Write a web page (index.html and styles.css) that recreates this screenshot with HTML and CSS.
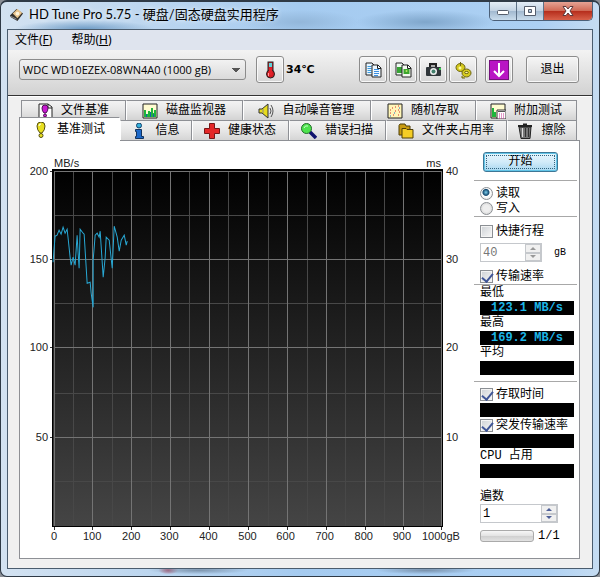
FILE: index.html
```html
<!DOCTYPE html>
<html lang="zh-CN">
<head>
<meta charset="utf-8">
<title>HD Tune Pro 5.75</title>
<link rel="stylesheet" href="styles.css">
</head>
<body>
<div class="window">
  <header class="titlebar">
    <svg class="app-icon" viewBox="0 0 16 16"><path d="M1 9 8 2l7 5-6 8-7-4z" fill="#33302c"/><path d="M4 7 9 2l5 4-5 6z" fill="#e9c48c"/><circle cx="9" cy="7" r="2" fill="#fff3d8"/><path d="m2 10 6 3" stroke="#999"/></svg>
    <h1 class="title">HD Tune Pro 5.75 - 硬盘/固态硬盘实用程序</h1>
    <div class="caption-buttons">
      <button class="cap" aria-label="最小化"><svg viewBox="0 0 14 12"><rect x="1.500" y="5.500" width="11" height="4" rx="1" fill="#fff" stroke="#555d6b"/></svg></button>
      <button class="cap" aria-label="最大化"><svg viewBox="0 0 14 12"><path d="M1.500 1.500h11v9h-11zM5.500 4.500v3h3v-3z" fill="#fff" fill-rule="evenodd" stroke="#555d6b"/></svg></button>
      <button class="cap close" aria-label="关闭"><svg viewBox="0 0 14 12"><path d="M2 1.500h3l2 2.500 2-2.500h3L9 6l3 4.500H9L7 8l-2 2.500H2L5 6z" fill="#fff" stroke="#5d3a3c"/></svg></button>
    </div>
  </header>

  <main class="client">
    <nav class="menu">
      <button>文件(<u>F</u>)</button>
      <button>帮助(<u>H</u>)</button>
    </nav>

    <div class="toolbar">
      <select class="drive" aria-label="硬盘"><option>WDC WD10EZEX-08WN4A0 (1000 gB)</option></select>
      <button class="tool" aria-label="温度"><svg viewBox="0 0 18 18"><rect x="7" y="1" width="5" height="11" fill="#d81c24" stroke="#222"/><path d="M8 2h3v4H8z" fill="#5ed3d9"/><circle cx="9.500" cy="13" r="4" fill="#d81c24" stroke="#222"/><path d="M8 7h3v7H8z" fill="#e3222a"/><path d="M7.500 12v3" stroke="#ff9b9b"/></svg></button>
      <output class="temp">34℃</output>
      <div class="tools">
        <button class="tool" aria-label="复制文本"><svg viewBox="0 0 18 18"><path d="M2 2h6l2 2v10H2z" fill="#e9f6ff" stroke="#222"/><path d="M3.500 5.500h4m-4 2h4m-4 2h4m-4 2h4" stroke="#3a9be0"/><path d="M8 4h6l3 3v9H8z" fill="#eef8ff" stroke="#222"/><path d="M13.500 4v3.500H17" fill="none" stroke="#222"/><path d="M10 8.500h5m-5 2h5m-5 2h5m-5 2h4" stroke="#3a8ee0"/></svg></button>
        <button class="tool" aria-label="复制图像"><svg viewBox="0 0 18 18"><path d="M2 2h6l2 2v10H2z" fill="#eefaf0" stroke="#222"/><path d="M3 6h5v6H3z" fill="#37a534"/><path d="M8 4h6l3 3v9H8z" fill="#f3faf0" stroke="#222"/><path d="M13.500 4v3.500H17" fill="none" stroke="#222"/><path d="M9.500 8h6v5h-6z" fill="#3ca72c"/><circle cx="12.500" cy="10" r="1" fill="#bde66a"/></svg></button>
        <button class="tool" aria-label="截图"><svg viewBox="0 0 18 18"><path d="M6 6V3h6v3" fill="#aaa" stroke="#222" stroke-width="2"/><rect x="2" y="6" width="15" height="9" rx="1" fill="#30363a"/><circle cx="9.500" cy="10.500" r="3.500" fill="#eee"/><circle cx="9.500" cy="10.500" r="2" fill="#42806c"/><path d="M15 7h2v2h-2z" fill="#30d14c"/></svg></button>
        <button class="tool" aria-label="选项"><svg viewBox="0 0 18 18"><g fill="#d5ca1d" stroke="#6c6410"><ellipse cx="6.500" cy="6.500" rx="4.500" ry="4"/><path d="M6.500 1v4"/><ellipse cx="12.500" cy="12" rx="4.500" ry="4"/><path d="M8 15v2h3"/></g><circle cx="6" cy="7" r="1.500" fill="#fff8a0"/><ellipse cx="12.500" cy="11.500" rx="2" ry="1" fill="#fff8a0" stroke="#6c6410"/></svg></button>
      </div>
      <button class="tool" aria-label="保存"><svg class="big" viewBox="0 0 20 20"><rect x=".5" y=".5" width="19" height="19" fill="#b915c4" stroke="#74107c"/><path d="M10 3v13M5 11l5 5 5-5" fill="none" stroke="#fff" stroke-width="2"/></svg></button>
      <button class="exit">退出</button>
    </div>

    <section class="body">
      <div class="tabs upper" role="tablist">
        <button role="tab"><svg viewBox="0 0 16 16"><path d="M2 1h9l4 3v11H2z" fill="#fff" stroke="#222"/><path d="M11 1v4h4" fill="none" stroke="#222"/><path d="M5 5q0-3 3-3t3 3q0 3-2 5H7Q5 8 5 5z" fill="#c719d0" stroke="#4b1050"/><circle cx="8" cy="12.500" r="1.500" fill="#c719d0" stroke="#4b1050"/></svg>文件基准</button>
        <button role="tab"><svg viewBox="0 0 16 16"><path d="M1 1h14v14H1z" fill="#fffbd0" stroke="#222"/><path d="M2 14V7h2v4h2V8h2v4h1V5h2v5h1V7h2v7z" fill="#1fb53c"/><path d="M4.500 14v-3m4 3V9m3 5v-3" stroke="#1464a8"/></svg>磁盘监视器</button>
        <button role="tab"><svg viewBox="0 0 16 16"><path d="M1 6h3l6-5v14l-6-5H1z" fill="#e8dc1c" stroke="#333"/><path d="M5 6v4" stroke="#888"/><path d="M12 5q2 3 0 6m1-9q4 6 0 12" fill="none" stroke="#555"/></svg>自动噪音管理</button>
        <button role="tab"><svg viewBox="0 0 16 16"><path d="M1 1h14v14H1z" fill="#fff6b8" stroke="#222"/><path d="M3 10h1m1-5h1m2 3h1m2-5h1m0 6h1M6 12h1m4 0h1M8 4h1M3 7h1m7 0h1" stroke="#d52828"/><path d="M3 13h1m3-3h1m4-5h1" stroke="#1d68c8"/></svg>随机存取</button>
        <button role="tab"><svg viewBox="0 0 16 16"><path d="M1 1h14v14H1z" fill="#fffbd0" stroke="#222"/><path d="M2 14V5h2v4h2v5z" fill="#1fb53c"/><path d="M7 7h9v9H7z" fill="#fff" stroke="#333"/><path d="M8 8h7v1H8z" fill="#555"/><path d="M9 11h6M9 13h6M9 15h6" stroke="#c43092" stroke-dasharray="1 1"/></svg>附加测试</button>
      </div>
      <div class="tabs lower" role="tablist">
        <button role="tab" class="active" aria-selected="true"><svg viewBox="0 0 16 16"><path d="M4 4q0-4 4-4t4 4q0 4-3 7H7Q4 8 4 4z" fill="#e8df20" stroke="#555010"/><path d="M6 4q0-2 2-2" stroke="#fff" fill="none"/><circle cx="8" cy="13.500" r="2" fill="#e8df20" stroke="#555010"/></svg>基准测试</button>
        <button role="tab"><svg viewBox="0 0 16 16"><circle cx="8" cy="2.500" r="2.500" fill="#35b0da" stroke="#123f6b"/><path d="M4.500 6.500h6v7h2v2h-8v-2h1v-5h-1z" fill="#1c68c9" stroke="#12335e"/></svg>信息</button>
        <button role="tab"><svg viewBox="0 0 16 16"><path d="M5.500.5h5v5h5v5h-5v5h-5v-5h-5v-5h5z" fill="#e42828" stroke="#771616"/></svg>健康状态</button>
        <button role="tab"><svg viewBox="0 0 16 16"><path d="m9 9 6 6" stroke="#10146e" stroke-width="3.500"/><circle cx="5.500" cy="5.500" r="5" fill="#4de34d" stroke="#206b28"/><path d="M3 5q1-3 4-2" stroke="#c8ffc8" fill="none"/></svg>错误扫描</button>
        <button role="tab"><svg viewBox="0 0 16 16"><path d="M1 2.500 2 1h5l1 2h4v9H1z" fill="#c79a10" stroke="#4e3e08"/><path d="M4 5.500h4l1 1h6V15H4z" fill="#f4cd25" stroke="#4e3e08"/></svg>文件夹占用率</button>
        <button role="tab"><svg viewBox="0 0 16 16"><path d="M2 4h12l-1 11.500H4z" fill="#777" stroke="#222"/><path d="M1 3h14M6 1.500h4" stroke="#222" stroke-width="2"/><path d="M5.500 5v9" stroke="#ddd"/><path d="M8.500 5v9m3-9v9" stroke="#333"/></svg>擦除</button>
      </div>

      <div class="panel">
        <svg class="chart" viewBox="0 0 453 392" role="img" aria-label="传输速率图表">
          <defs>
            <linearGradient id="plot" x1="0" y1="0" x2="0" y2="1"><stop offset="0" stop-color="#000"/><stop offset="1" stop-color="#454545"/></linearGradient>
          </defs>
          <g transform="translate(34 19)">
            <rect x="-2" y="-2" width="390" height="357" fill="url(#plot)"/>
            <path class="minor" d="M19.500 0v354M58.500 0v354M97.500 0v354M135.500 0v354M174.500 0v354M213.500 0v354M252.500 0v354M290.500 0v354M329.500 0v354M368.500 0v354M0 44.500h387M0 132.500h387M0 221.500h387M0 309.500h387"/>
            <path class="major" d="M.5 0v354M38.500 0v354M77.500 0v354M116.500 0v354M155.500 0v354M193.500 0v354M232.500 0v354M271.500 0v354M310.500 0v354M348.500 0v354M386.500 0v354M0 .5h387M0 88.500h387M0 176.500h387M0 265.500h387"/>
            <path d="M-1.500-2v357M-2-1.500h390M387.500-2v357M-2 354.500h390" stroke="#000"/>
            <path class="tick" d="M.5 355v3M38.500 355v3M77.500 355v3M116.500 355v3M155.500 355v3M193.500 355v3M232.500 355v3M271.500 355v3M310.500 355v3M348.500 355v3M386.500 355v3M-4 .5h2M-4 88.500h2M-4 176.500h2M-4 265.500h2"/>
            <polyline class="rate" points="-1,91 1,65 3,64 5,59 7,63 9,56 11,62 13,58 14,67 16,86 17,94 19,86 21,94 23,64 24,82 25,97 26,58 29,62 30,63 33,112 36,111 37,122 39,136 39,89 41,64 43,62 45,66 46,60 49,106 51,86 52,66 55,69 58,97 60,55 63,66 65,80 67,69 70,64 72,74 73,70"/>
            <g class="end"><text x="-6" y="4">200</text><text x="-6" y="92">150</text><text x="-6" y="180">100</text><text x="-6" y="269">50</text><text x="386" y="-4">ms</text></g>
            <g><text x="0" y="-4">MB/s</text><text x="391" y="4">40</text><text x="391" y="92">30</text><text x="391" y="180">20</text><text x="391" y="269">10</text></g>
            <g class="mid"><text x="0" y="368">0</text><text x="38" y="368">100</text><text x="77" y="368">200</text><text x="115" y="368">300</text><text x="154" y="368">400</text><text x="193" y="368">500</text><text x="231" y="368">600</text><text x="270" y="368">700</text><text x="309" y="368">800</text><text x="347" y="368">900</text><text x="386" y="368">1000gB</text></g>
          </g>
        </svg>

        <aside class="side">
          <button class="start">开始</button>
          <div class="group modes">
            <label><input type="radio" name="mode" checked>读取</label>
            <label><input type="radio" name="mode">写入</label>
          </div>
          <div class="group options">
            <label><input type="checkbox">快捷行程</label>
            <div class="row">
              <div class="spin disabled"><input type="text" value="40" aria-label="快捷行程 gB" disabled><span class="arrows"><button aria-label="增加" disabled></button><button class="down" aria-label="减少" disabled></button></span></div>
              <span>gB</span>
            </div>
            <label><input type="checkbox" checked>传输速率</label>
          </div>
          <div class="group readings">
            <span class="name">最低</span><output class="lcd">123.1 MB/s</output>
            <span class="name">最高</span><output class="lcd">169.2 MB/s</output>
            <span class="name">平均</span><output class="lcd"></output>
          </div>
          <div class="group extras">
            <label><input type="checkbox" checked>存取时间</label><output class="lcd"></output>
            <label><input type="checkbox" checked>突发传输速率</label><output class="lcd"></output>
            <span class="name">CPU 占用</span><output class="lcd"></output>
          </div>
          <div class="passes">
            <label for="passes">遍数</label>
            <div class="spin wide"><input id="passes" type="text" value="1"><span class="arrows"><button aria-label="增加"></button><button class="down" aria-label="减少"></button></span></div>
            <div class="row progress-row"><div class="progress" role="progressbar" aria-label="进度"></div><span>1/1</span></div>
          </div>
        </aside>
      </div>
    </section>
  </main>
</div>
</body>
</html>
```

FILE: styles.css
```css
* { box-sizing: border-box; }

body {
  margin: 0;
  background: #8b8f96;
  color: #000;
  font: 12px/16px "Liberation Mono", "Noto Sans CJK SC", monospace;
}

button, input, select, output { font: inherit; color: inherit; }
button { padding: 0; }

/* Window frame */
.window {
  display: flex;
  flex-direction: column;
  min-height: 100vh;
  padding: 0 6px 7px;
  border: 1px solid #2f3a46;
  border-top-width: 2px;
  border-radius: 7px;
  background:
    radial-gradient(ellipse 50px 4px at 33% 99%, #7c94ad, transparent),
    radial-gradient(ellipse 10px 4px at 28% 99%, #b0506a, transparent),
    radial-gradient(ellipse 50px 4px at 71% 99%, #7890aa, transparent),
    radial-gradient(ellipse 70px 9px at 14% 27px, #6f9cc6, transparent),
    radial-gradient(ellipse 70px 12px at 71% 20px, #7fa6cb, transparent),
    radial-gradient(ellipse 60px 12px at 50% 20px, #93b7da, transparent),
    linear-gradient(90deg, #d3e2f1, #bcd6ef 25%, #a5cbf0 50%, #acd0f3 90%, #c5dcf2);
}

.titlebar { display: flex; align-items: flex-start; height: 27px; padding-left: 2px; }
.app-icon { width: 15px; height: 15px; margin-top: 5px; }
.title {
  flex: 1;
  margin: 3px 0 0 5px;
  font: 13px/18px Lato, "Noto Sans CJK SC", sans-serif;
  text-shadow: 0 0 5px #fff;
}
.caption-buttons {
  display: flex;
  height: 19px;
  border: 1px solid #4c6078;
  border-top: 0;
  border-radius: 0 0 5px 5px;
  overflow: hidden;
}
.cap {
  display: flex;
  align-items: center;
  justify-content: center;
  width: 27px;
  border: 0;
  border-right: 1px solid #5c7086;
  background: linear-gradient(#e3edf6, #c3d3e3 48%, #a1b8cf 50%, #c9dcec);
}
.cap svg { width: 14px; height: 12px; }
.close { width: 48px; border-right: 0; background: linear-gradient(#e4a394, #cf6a56 48%, #b52c1b 50%, #d8614a); }

.client { display: flex; flex: 1; flex-direction: column; border: 1px solid #4a5c6e; background: #f0f0f0; }

.menu { display: flex; gap: 19px; height: 20px; padding-left: 7px; background: #dfe4ee; }
.menu button { border: 0; background: none; font: 12px/20px "Noto Sans", "Noto Sans CJK SC", sans-serif; }

/* Toolbar */
.toolbar {
  display: flex;
  align-items: center;
  height: 46px;
  padding: 0 13px 6px 11px;
  border-bottom: 1px solid #333;
  background: linear-gradient(#f3f3f3, #d2d2d2);
}
.drive {
  width: 227px;
  height: 21px;
  padding: 0 3px;
  border: 1px solid #8b8b8b;
  border-radius: 3px;
  appearance: none;
  background:
    linear-gradient(45deg, transparent 50%, #555 50%) right 9px center / 4px 4px no-repeat,
    linear-gradient(-45deg, transparent 50%, #555 50%) right 5px center / 4px 4px no-repeat,
    linear-gradient(#f2f2f2, #dadada);
  font: 11px/18px "Open Sans", sans-serif;
}
.tool, .exit {
  display: flex;
  align-items: center;
  justify-content: center;
  width: 28px;
  height: 27px;
  border: 1px solid #8c8c8c;
  border-radius: 3px;
  background: linear-gradient(#f6f6f6, #e6e6e6 50%, #d6d6d6);
  box-shadow: inset 0 0 0 1px #f8f8f8;
}
.drive + .tool { margin-left: 10px; }
.tool svg { width: 18px; height: 18px; }
.tool .big { width: 20px; height: 20px; }
.temp { margin-left: 2px; font: bold 11px/16px "DejaVu Sans", "Noto Sans CJK SC", sans-serif; white-space: nowrap; }
.tools { display: flex; gap: 2px; margin: 0 8px 0 auto; }
.exit { width: 53px; margin-left: 13px; }

/* Tabs */
.body { display: flex; flex: 1; flex-direction: column; padding: 3px 12px 9px 11px; border-top: 1px solid #fff; }
.tabs { display: grid; height: 20px; }
.upper { grid-template-columns: 105fr 117fr 128fr 105fr 101fr; margin: 0 3px 0 2px; }
.lower { grid-template-columns: 101fr 72fr 97fr 97fr 121fr 70fr; margin-right: 3px; }
.tabs button {
  display: flex;
  align-items: center;
  justify-content: center;
  gap: 8px;
  padding-right: 1px;
  border: 1px solid #8e9095;
  border-left-color: #fff;
  border-bottom: 0;
  background: linear-gradient(#f3f3f3, #e6e6e6 50%, #d3d3d3);
  white-space: nowrap;
}
.tabs svg { width: 16px; height: 16px; }
.upper button:first-child { border-left-color: #8e9095; }
.tabs .active {
  position: relative;
  z-index: 1;
  height: 24px;
  margin-top: -3px;
  border-left-color: #8e9095;
  border-right-color: #fff;
  background: #fff;
}

.panel {
  display: flex;
  flex: 1;
  align-items: flex-start;
  padding: 11px 2px 8px 0;
  border: 1px solid #8e9095;
  background: #fff;
}

/* Chart */
.chart { flex: 1; min-width: 0; }
.chart text { font: 11px "Liberation Sans", sans-serif; fill: #222; }
.chart path { shape-rendering: crispEdges; fill: none; }
.minor { stroke: #484848; }
.major { stroke: #747474; }
.tick { stroke: #333; }
.rate { fill: none; stroke: #28a8d4; }
.end { text-anchor: end; }
.mid { text-anchor: middle; }

/* Controls */
.side { display: flex; flex-direction: column; width: 103px; }
.start {
  width: 75px;
  height: 20px;
  margin: 0 0 8px 9px;
  border: 1px solid #3e7796;
  border-radius: 3px;
  outline: 1px dotted #34647f;
  outline-offset: -4px;
  background: linear-gradient(#e8f5fc, #d2ebf9 50%, #a8d7f0);
  box-shadow: inset 0 0 0 1px #62c5e8;
}
.group { display: flex; flex-direction: column; padding-left: 6px; border-top: 1px solid #a8a8a8; }
.modes { padding-top: 5px; }
.side label { display: flex; align-items: center; gap: 3px; height: 15px; white-space: nowrap; }
.side label input { flex: none; width: 13px; height: 13px; margin: 0; border: 1px solid #8b8f94; appearance: none; }
input[type="radio"] { border-radius: 50%; background: radial-gradient(#eee 40%, #ccc); }
input[type="radio"]:checked { background: radial-gradient(circle at 45% 40%, #7fd0ee, #14496f 3px, #fff 4px, #ddd); }
input[type="checkbox"] { background: linear-gradient(135deg, #cdd1d5, #f8f8f8); box-shadow: inset 0 0 0 1px #f4f4f4; }
input[type="checkbox"]:checked::after {
  content: "";
  display: block;
  width: 5px;
  height: 9px;
  margin: 0 0 0 3px;
  border: solid #3f5597;
  border-width: 0 2px 2px 0;
  transform: rotate(40deg);
}
.options { padding-top: 7px; }
.row { display: flex; align-items: center; gap: 12px; font-size: 10px; }
.options .row { margin: 4px 0 7px; }

.spin { display: flex; width: 62px; height: 19px; border: 1px solid #c5c8cc; background: #fff; }
.spin.wide { width: 78px; }
.spin input { flex: 1; width: 0; min-width: 0; padding: 0 2px; border: 0; background: none; font-size: 12px; }
.disabled input { color: #777; }
.arrows { display: grid; width: 16px; }
.arrows button {
  display: grid;
  place-items: center;
  border: 1px solid #c5c8cc;
  background: #f0f0f0;
}
.arrows button::after { content: ""; border: 3px solid transparent; border-top-width: 0; border-bottom-color: #4c5e98; }
.arrows .down::after { border-width: 3px 3px 0; border-top-color: #4c5e98; }
.disabled button::after { filter: grayscale(1); opacity: .6; }

.name { height: 16px; line-height: 16px; }
.lcd {
  height: 14px;
  margin-right: 3px;
  background: #000;
  color: #1cb4e6;
  font: bold 12px/14px "Liberation Mono", monospace;
  text-align: center;
}
.readings { padding-bottom: 6px; }
.extras { padding-top: 4px; }
.extras label { height: 17px; }
.passes { display: flex; flex-direction: column; padding: 11px 0 0 6px; }
.progress-row { gap: 4px; margin-top: 5px; font-size: 12px; }
.progress { width: 54px; height: 12px; border: 1px solid #aaa; border-radius: 3px; background: linear-gradient(#f6f6f6, #e4e4e4 45%, #cfcfcf 50%, #e2e2e2); }
```
